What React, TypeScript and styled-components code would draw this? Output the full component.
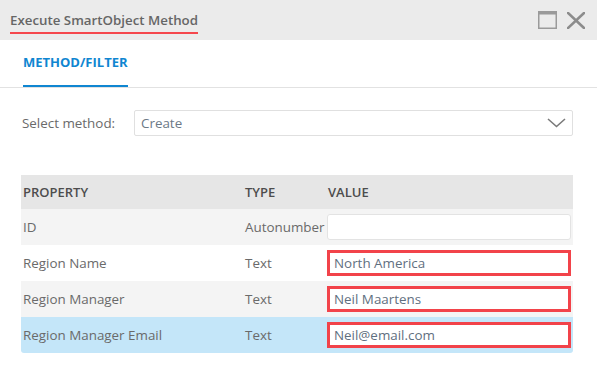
import React from 'react';
import styled, { createGlobalStyle } from 'styled-components';

const GlobalStyle = createGlobalStyle`
  html, body {
    margin: 0;
    padding: 0;
    background: #ffffff;
    font-family: "Open Sans", "Noto Sans", sans-serif;
  }
`;

const Dialog = styled.div`
  width: 597px;
  height: 376px;
  background: #ffffff;
  display: flex;
  flex-direction: column;
`;

const TitleBar = styled.header`
  height: 40px;
  background: #ebebeb;
  display: flex;
  align-items: center;
  justify-content: space-between;
  padding: 0 12px 0 10px;
  box-sizing: border-box;
`;

const Title = styled.h1`
  margin: 0;
  font-size: 13.3px;
  font-weight: 600;
  color: #666666;
  line-height: 19px;
  padding-top: 4px;
  padding-bottom: 2px;
  border-bottom: 2px solid #f5474d;
`;

const WindowButtons = styled.div`
  display: flex;
  align-items: center;
  gap: 10px;
`;

const TabBar = styled.nav`
  height: 47px;
  display: flex;
  align-items: flex-end;
  padding-left: 23px;
  border-bottom: 1px solid #e2e2e2;
`;

const Tab = styled.div<{ $active?: boolean }>`
  font-size: 13px;
  font-weight: 700;
  color: #0f86d1;
  line-height: 18px;
  padding-bottom: 14px;
  border-bottom: 2px solid ${(p) => (p.$active ? '#0f86d1' : 'transparent')};
`;

const FormRow = styled.div`
  display: flex;
  align-items: center;
  padding: 22px 24px 0 22px;
`;

const Label = styled.label`
  width: 112px;
  font-size: 13.4px;
  color: #6a6a6a;
`;

const SelectBox = styled.div`
  flex: 1;
  height: 26px;
  box-sizing: border-box;
  border: 1px solid #e0e0e0;
  border-radius: 2px;
  display: flex;
  align-items: center;
  justify-content: space-between;
  padding: 0 6px 0 6px;
  font-size: 13.4px;
  color: #6c7986;
`;

const Table = styled.div`
  margin: 39px 24px 0 21px;
  border-radius: 0 0 3px 3px;
  overflow: hidden;
`;

const Row = styled.div<{ $bg: string; $height: number }>`
  display: grid;
  grid-template-columns: 222px 83px 1fr;
  align-items: center;
  height: ${(p) => p.$height}px;
  background: ${(p) => p.$bg};
`;

const HeadCell = styled.div`
  padding-left: 2px;
  font-size: 13px;
  font-weight: 600;
  color: #4d4d4d;
`;

const Cell = styled.div`
  padding-left: 2px;
  font-size: 13.4px;
  color: #6a6a6a;
  white-space: nowrap;
`;

const ValueCell = styled.div`
  padding-left: 1px;
  padding-right: 2px;
`;

const ValueInput = styled.div<{ $highlight?: boolean }>`
  height: 26px;
  box-sizing: border-box;
  background: #ffffff;
  border: ${(p) => (p.$highlight ? '3px solid #f2434a' : '1px solid #e3e3e3')};
  border-radius: ${(p) => (p.$highlight ? '0' : '3px')};
  display: flex;
  align-items: center;
  padding-left: ${(p) => (p.$highlight ? '4px' : '6px')};
  font-size: 13.4px;
  color: #5f6f80;
`;

const MaximizeIcon = () => (
  <svg width="19" height="18" viewBox="0 0 19 18">
    <rect x="0.75" y="0.75" width="17.5" height="16.5" fill="none" stroke="#9a9a9a" strokeWidth="1.5" />
    <rect x="0" y="0" width="19" height="3.5" fill="#9a9a9a" />
  </svg>
);

const CloseIcon = () => (
  <svg width="18" height="17" viewBox="0 0 18 17">
    <path d="M1 1 L17 16 M17 1 L1 16" stroke="#8c8c8c" strokeWidth="2.6" strokeLinecap="square" />
  </svg>
);

const Chevron = () => (
  <svg width="19" height="10" viewBox="0 0 19 10">
    <polyline points="1,1 9.5,8.5 18,1" fill="none" stroke="#7a7a7a" strokeWidth="1.6" />
  </svg>
);

const rows = [
  { property: 'ID', type: 'Autonumber', value: '', highlight: false, bg: '#f4f4f4' },
  { property: 'Region Name', type: 'Text', value: 'North America', highlight: true, bg: '#ffffff' },
  { property: 'Region Manager', type: 'Text', value: 'Neil Maartens', highlight: true, bg: '#f4f4f4' },
  { property: 'Region Manager Email', type: 'Text', value: 'Neil@email.com', highlight: true, bg: '#c4e6f9' },
];

const App = () => {
  return (
    <Dialog>
      <GlobalStyle />
      <TitleBar>
        <Title>Execute SmartObject Method</Title>
        <WindowButtons>
          <MaximizeIcon />
          <CloseIcon />
        </WindowButtons>
      </TitleBar>
      <TabBar>
        <Tab $active>METHOD/FILTER</Tab>
      </TabBar>
      <FormRow>
        <Label>Select method:</Label>
        <SelectBox>
          <span>Create</span>
          <Chevron />
        </SelectBox>
      </FormRow>
      <Table>
        <Row $bg="#e6e6e6" $height={34}>
          <HeadCell>PROPERTY</HeadCell>
          <HeadCell>TYPE</HeadCell>
          <HeadCell>VALUE</HeadCell>
        </Row>
        {rows.map((r) => (
          <Row key={r.property} $bg={r.bg} $height={36}>
            <Cell>{r.property}</Cell>
            <Cell>{r.type}</Cell>
            <ValueCell>
              <ValueInput $highlight={r.highlight}>{r.value}</ValueInput>
            </ValueCell>
          </Row>
        ))}
      </Table>
    </Dialog>
  );
};

export default App;
